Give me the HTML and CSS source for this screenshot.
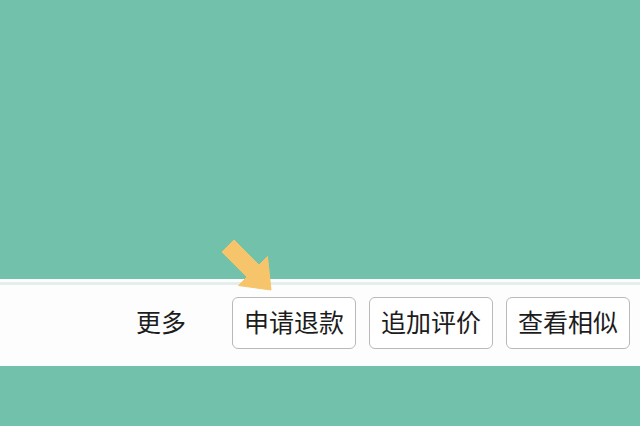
FILE: index.html
```html
<!DOCTYPE html>
<html>
<head>
    <title>Order actions</title>
    <link rel="stylesheet" href="styles.css">
</head>
<body>
    <div class="top"></div>
    <div class="bar">
        <div class="bar_line"></div>
        <div class="actions">
            <span class="more">更多</span>
            <button class="btn">申请退款</button>
            <button class="btn">追加评价</button>
            <button class="btn">查看相似</button>
        </div>
        <svg class="arrow" width="56" height="64" viewBox="0 0 56 64">
            <polygon points="1,22 13,10 38,35 46.5,26.5 50,60 17.5,55.5 26,47" fill="#f6c56b" stroke="#f6c56b" stroke-width="1" stroke-linejoin="round"/>
        </svg>
    </div>
    <div class="bottom"></div>
</body>
</html>
```
FILE: styles.css
```css
body {
    margin: 0;
    background-color: #72c1aa;
    font-family: "Noto Sans CJK SC", "Noto Sans", sans-serif;
}

.top {
    height: 279px;
}

.bar {
    position: relative;
    background-color: #fdfdfd;
    height: 87px;
    padding-top: 3px;
    box-sizing: border-box;
}

.bar_line {
    height: 3px;
    background-color: #e4eeeb;
}

.actions {
    display: flex;
    justify-content: flex-end;
    align-items: center;
    gap: 13px;
    padding: 12px 10px 0 0;
}

.more {
    font-size: 25px;
    line-height: 1;
    color: #1c1c1c;
    margin-right: 33px;
    margin-bottom: 4px;
}

.btn {
    width: 124px;
    height: 52px;
    background: #fff;
    border: 1px solid #b9b9b9;
    border-radius: 6px;
    font-family: inherit;
    font-size: 25px;
    line-height: 1;
    color: #1c1c1c;
    padding: 0 0 4px 0;
}

.arrow {
    position: absolute;
    left: 221px;
    top: -49px;
}
```
